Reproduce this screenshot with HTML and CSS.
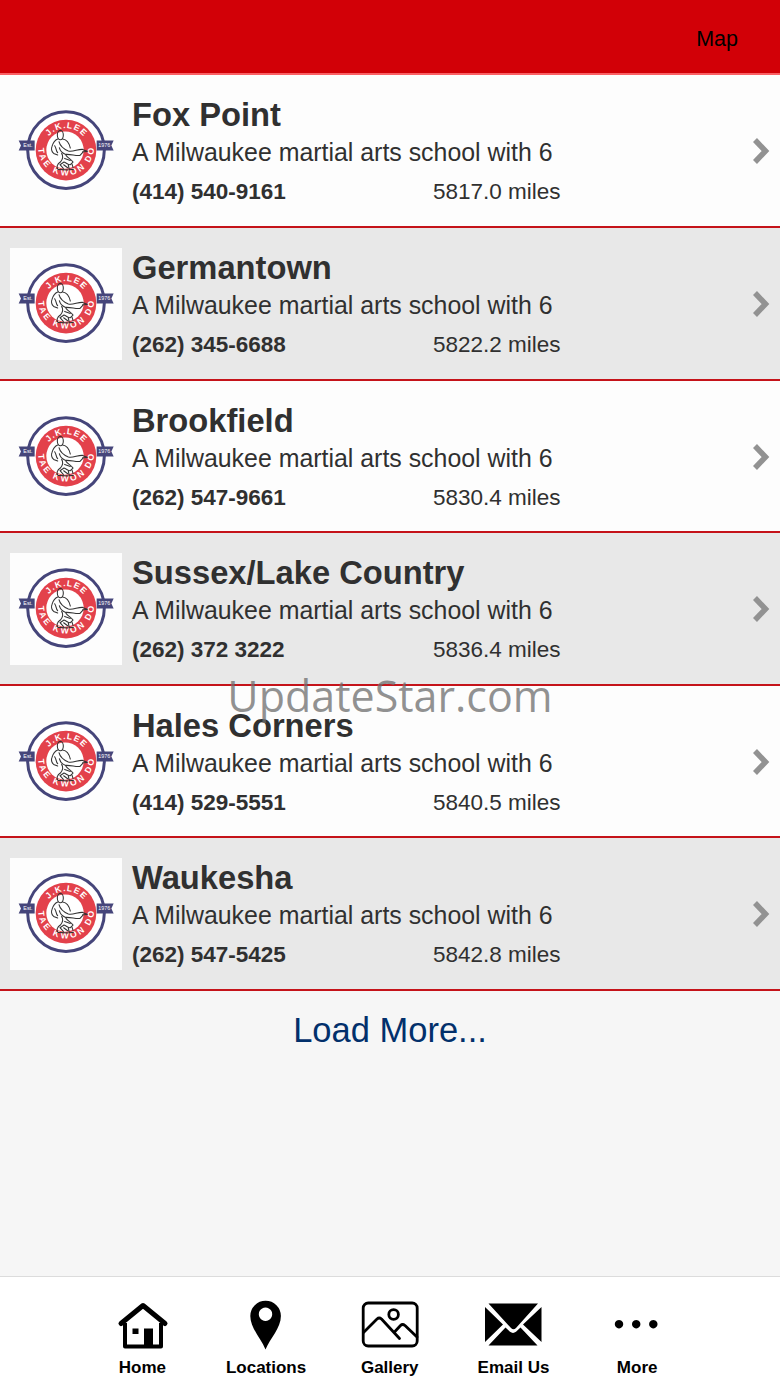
FILE: index.html
```html
<!DOCTYPE html>
<html lang="en">
<head>
    <meta charset="UTF-8">
    <meta name="viewport" content="width=device-width, initial-scale=1.0">
    <title>Locations</title>
    <link rel="stylesheet" href="styles.css">
</head>
<body>
    <!-- shared icons -->
    <svg class="sprite" width="0" height="0">
        <symbol id="logo" viewBox="0 0 112 112">
            <g transform="translate(-10 -5.6) scale(.33333)">
                <circle cx="198" cy="182" r="115" fill="#fff" stroke="#45457a" stroke-width="9"/>
                <path d="M56 153H104V183H56L63 168ZM341 153H290V183H341L334 168Z" fill="#45457a"/>
                <circle cx="198" cy="182" r="91" fill="#e3414b"/>
                <circle cx="195" cy="182" r="56" fill="#fff"/>
                <path id="arc-top" d="M132 182A66 66 0 0 1 264 182" fill="none"/>
                <path id="arc-bottom" d="M114 174A84 84 0 0 0 282 174" fill="none"/>
                <text class="logo-top"><textPath href="#arc-top" startOffset="50%" text-anchor="middle" textLength="118">J.K.LEE</textPath></text>
                <text class="logo-bottom"><textPath href="#arc-bottom" startOffset="50%" text-anchor="middle" textLength="258">TAE KWON DO</textPath></text>
                <text class="logo-year" x="70" y="174">Est.</text>
                <text class="logo-year" x="295" y="174">1976</text>
                <g fill="none" stroke="#333" stroke-width="3.2" stroke-linecap="round" stroke-linejoin="round">
                    <ellipse cx="181" cy="137" rx="9" ry="14"/>
                    <path d="M173 149C162 153 159 161 156 171C153 179 155 187 161 192L173 197"/>
                    <path d="M164 169C170 177 167 184 173 190"/>
                    <path d="M188 149C201 151 208 163 211 176"/>
                    <path d="M177 157C181 173 193 180 205 185C220 188 233 179 248 180L262 186L248 187"/>
                    <path d="M178 175C181 187 187 192 197 195C214 194 227 200 240 198L249 188"/>
                    <path d="M185 192C190 200 188 210 181 218C172 224 168 233 174 240L204 242"/>
                    <path d="M198 198C204 207 214 209 219 218L211 226C205 227 199 220 192 218L180 226L190 237"/>
                    <path d="M194 207L211 213M205 227L208 241L220 240M216 224L219 234M191 226L203 235"/>
                </g>
            </g>
        </symbol>
        <symbol id="arrow" viewBox="0 0 18 28">
            <path d="M3 3L13.5 14L3 25" fill="none" stroke="#929292" stroke-width="5.500"/>
        </symbol>
    </svg>

    <header>
        <a href="#" class="map-link">Map</a>
    </header>

    <main>
        <div class="location">
            <svg class="logo"><use href="#logo"/></svg>
            <div class="info">
                <h2>Fox Point</h2>
                <p>A Milwaukee martial arts school with 6</p>
                <div class="details"><b>(414) 540-9161</b><span>5817.0 miles</span></div>
            </div>
            <svg class="arrow"><use href="#arrow"/></svg>
        </div>
        <div class="location">
            <svg class="logo"><use href="#logo"/></svg>
            <div class="info">
                <h2>Germantown</h2>
                <p>A Milwaukee martial arts school with 6</p>
                <div class="details"><b>(262) 345-6688</b><span>5822.2 miles</span></div>
            </div>
            <svg class="arrow"><use href="#arrow"/></svg>
        </div>
        <div class="location">
            <svg class="logo"><use href="#logo"/></svg>
            <div class="info">
                <h2>Brookfield</h2>
                <p>A Milwaukee martial arts school with 6</p>
                <div class="details"><b>(262) 547-9661</b><span>5830.4 miles</span></div>
            </div>
            <svg class="arrow"><use href="#arrow"/></svg>
        </div>
        <div class="location">
            <svg class="logo"><use href="#logo"/></svg>
            <div class="info">
                <h2>Sussex/Lake Country</h2>
                <p>A Milwaukee martial arts school with 6</p>
                <div class="details"><b>(262) 372 3222</b><span>5836.4 miles</span></div>
            </div>
            <svg class="arrow"><use href="#arrow"/></svg>
        </div>
        <div class="location">
            <svg class="logo"><use href="#logo"/></svg>
            <div class="info">
                <h2>Hales Corners</h2>
                <p>A Milwaukee martial arts school with 6</p>
                <div class="details"><b>(414) 529-5551</b><span>5840.5 miles</span></div>
            </div>
            <svg class="arrow"><use href="#arrow"/></svg>
        </div>
        <div class="location">
            <svg class="logo"><use href="#logo"/></svg>
            <div class="info">
                <h2>Waukesha</h2>
                <p>A Milwaukee martial arts school with 6</p>
                <div class="details"><b>(262) 547-5425</b><span>5842.8 miles</span></div>
            </div>
            <svg class="arrow"><use href="#arrow"/></svg>
        </div>
        <a href="#" class="load-more">Load More...</a>
        <div class="watermark">UpdateStar.com</div>
    </main>

    <nav>
        <a href="#">
            <svg viewBox="0 0 60 52">
                <path d="M13 23V46.500H49V23" fill="none" stroke="#000" stroke-width="4" stroke-linejoin="round"/>
                <path d="M9 23.500L31 5.500L53 23.500" fill="none" stroke="#000" stroke-width="5" stroke-linecap="round" stroke-linejoin="round"/>
                <path d="M20.500 28.500h6v5.500h-6zM32 28.500h9v18h-9z"/>
            </svg>
            <span>Home</span>
        </a>
        <a href="#">
            <svg viewBox="0 0 60 52">
                <path fill-rule="evenodd" d="M29.500 49.500C25 38.500 14.300 28 14.300 16A15.300 15.300 0 0 1 44.900 16C44.900 28 34 38.500 29.500 49.500ZM29.500 7.500a6.700 6.700 0 1 0 .01 0z"/>
            </svg>
            <span>Locations</span>
        </a>
        <a href="#">
            <svg viewBox="0 0 60 52">
                <g fill="none" stroke="#000" stroke-width="2.800" stroke-linecap="round" stroke-linejoin="round">
                    <rect x="3.200" y="3" width="54" height="43" rx="5"/>
                    <circle cx="33.600" cy="14.500" r="4.800"/>
                    <path d="M3.500 32.500L17 19Q19.200 17 21.500 19L39.500 38.500M34.500 32L40.500 25.500Q42.500 23.500 45 25.500L57 37"/>
                </g>
            </svg>
            <span>Gallery</span>
        </a>
        <a href="#">
            <svg viewBox="0 0 60 52">
                <path d="M5.500 3.500H55L33 28Q30.500 30.500 28 28ZM2 7L20 24.500L2 42ZM58.500 7V42L40 24.500ZM5.500 45.500L22.500 27.500L27 31.800Q30 34 33 31.800L37.500 27.500L54.500 45.500Z"/>
            </svg>
            <span>Email Us</span>
        </a>
        <a href="#">
            <svg viewBox="0 0 60 52">
                <path d="M12 20a4.200 4.200 0 1 0 .01 0zM29.200 20a4.200 4.200 0 1 0 .01 0zM46.300 20a4.200 4.200 0 1 0 .01 0z"/>
            </svg>
            <span>More</span>
        </a>
    </nav>
</body>
</html>
```
FILE: styles.css
```css
* {
    box-sizing: border-box;
}

body {
    margin: 0;
    height: 1387px;
    display: flex;
    flex-direction: column;
    font-family: "Liberation Sans", Arial, sans-serif;
    color: #303030;
    background-color: #f6f6f6;
}

a {
    text-decoration: none;
    color: #000;
}

.sprite {
    position: absolute;
}

header {
    height: 75.400px;
    padding: 0 42px 0 0;
    display: flex;
    justify-content: flex-end;
    background-color: #d20007;
    border-bottom: 2px solid #fb6065;
}

.map-link {
    font-size: 21.500px;
    line-height: 78px;
}

main {
    flex: 1;
    position: relative;
}

.location {
    height: 152.600px;
    padding: 20px 10px 0 10px;
    display: flex;
    background-color: #fdfdfd;
    border-bottom: 2px solid #c5131a;
}

.location:nth-child(even) {
    background-color: #e8e8e8;
}

.logo {
    width: 112px;
    height: 112px;
    margin-right: 10px;
    background-color: #fdfdfd;
}

.logo-top,
.logo-bottom,
.logo-year {
    font-family: "Liberation Sans", Arial, sans-serif;
    fill: #fff;
}

.logo-top {
    font-size: 26px;
    font-weight: bold;
}

.logo-bottom {
    font-size: 26px;
    font-weight: bold;
}

.logo-year {
    font-size: 16px;
}

.info {
    flex: 1;
}

.info h2 {
    margin: 0;
    font-size: 32.700px;
    line-height: 40px;
}

.info p {
    margin: 0;
    font-size: 24.900px;
    line-height: 34px;
}

.details {
    display: flex;
    font-size: 22.500px;
    line-height: 45px;
}

.details b {
    width: 301px;
}

.arrow {
    width: 18px;
    height: 28px;
    margin-top: 42px;
}

.load-more {
    display: block;
    text-align: center;
    font-size: 34.500px;
    line-height: 78px;
    color: #02306b;
}

.watermark {
    position: absolute;
    top: 591px;
    left: 0;
    width: 100%;
    text-align: center;
    font-family: "Open Sans", sans-serif;
    font-size: 43px;
    line-height: 60px;
    color: rgba(110, 110, 110, 0.75);
}

nav {
    height: 111px;
    padding: 23px 81px 0 80.500px;
    display: flex;
    background-color: #fff;
    border-top: 1px solid #dcdcdc;
}

nav a {
    flex: 1;
    display: flex;
    flex-direction: column;
    align-items: center;
    font-size: 17px;
    font-weight: bold;
    line-height: 20px;
}

nav svg {
    width: 60px;
    height: 52px;
    margin-bottom: 6px;
}
```
